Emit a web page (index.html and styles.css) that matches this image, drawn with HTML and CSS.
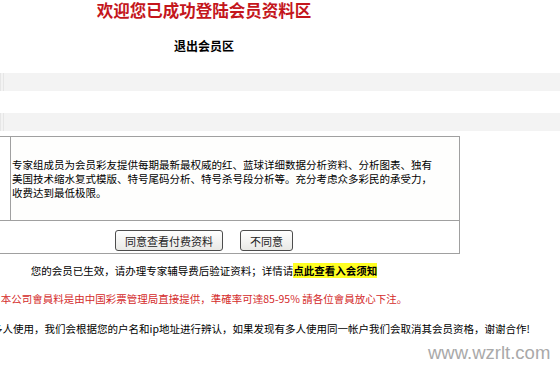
FILE: index.html
```html
<!DOCTYPE html>
<html lang="zh-CN">
<head>
  <meta charset="UTF-8">
  <meta name="viewport" content="width=device-width, initial-scale=1.0">
  <title>会员资料区</title>
  <link rel="stylesheet" href="styles.css">
</head>
<body>

<!-- HEADER -->
<div class="head">
  <h1 class="title">欢迎您已成功登陆会员资料区</h1>
  <a class="logout" href="#">退出会员区</a>
</div>

<div class="band band-first"></div>
<div class="band band-second"></div>

<!-- MEMBER AGREEMENT -->
<div class="main">
  <div class="panel">
    <div class="info">
      <div class="info-side"></div>
      <div class="info-text">
        专家组成员为会员彩友提供每期最新最权威的红、蓝球详细数据分析资料、分析图表、独有<br>
        美国技术缩水复式模版、特号尾码分析、特号杀号段分析等。充分考虑众多彩民的承受力，<br>
        收费达到最低极限。
      </div>
    </div>
    <div class="actions">
      <button class="btn">同意查看付费资料</button>
      <button class="btn">不同意</button>
    </div>
  </div>

  <p class="notice">您的会员已生效，请办理专家辅导费后验证资料；详情请<a class="mark" href="#">点此查看入会须知</a></p>
  <p class="notice notice-red">本公司會員料是由中国彩票管理局直接提供，準確率可達85-95% 請各位會員放心下注。</p>
  <p class="notice notice-wide">多人使用，我们会根据您的户名和ip地址进行辨认，如果发现有多人使用同一帐户我们会取消其会员资格，谢谢合作!</p>
</div>

<div class="watermark">www.wzrlt.com</div>

</body>
</html>
```

FILE: styles.css
```css
body {
  margin: 0;
  background: #fff;
  color: #000;
  font-family: "Noto Sans CJK SC", "Noto Sans", sans-serif;
  overflow: hidden;
}
.head { width: 408px; text-align: center; }
.title {
  margin: 0;
  font-size: 16.5px; line-height: 20px;
  font-weight: bold; color: #c4161c;
}
.logout {
  display: block; margin-top: 18px;
  font-size: 12px; line-height: 16px;
  font-weight: bold; color: #000; text-decoration: none;
}
.band { height: 18px; background: #f3f3f3; border-left: 4px double #e6e6e6; }
.band-first { margin-top: 19px; }
.band-second { margin-top: 22px; }

.main { width: 512px; margin-left: -52px; }
.panel { margin-top: 5px; border: 1px solid #a0a0a0; }
.info { display: flex; height: 83px; border-bottom: 1px solid #a0a0a0; }
.info-side { width: 61px; border-right: 1px solid #a0a0a0; }
.info-text {
  flex: 1;
  display: flex; align-items: center;
  padding-left: 1px;
  font-size: 10.5px; line-height: 14px;
  background: #fefefd;
}
.actions {
  display: flex; justify-content: center; gap: 17px;
  height: 32px; padding-top: 9px; box-sizing: border-box;
}
.btn {
  height: 21px; padding: 0 9px;
  font-family: inherit; font-size: 11px; color: #222;
  border: 1px solid #4d4d4d; border-radius: 3px;
  background: linear-gradient(#ffffff, #e9e9e6);
  cursor: pointer;
}
.notice {
  margin: 10px 0 0;
  font-size: 10.5px; line-height: 14px;
  text-align: center; white-space: nowrap;
}
.notice-red { margin-top: 14px; color: #d42b2b; }
.notice-wide { margin-top: 16px; text-align: left; padding-left: 44px; }
.mark { font-weight: bold; color: #000; background: #ffff22; text-decoration: none; }

.watermark {
  position: absolute; left: 428px; top: 343px;
  font-family: "Liberation Sans", Arial, sans-serif;
  font-size: 18.5px; line-height: 20px;
  color: #a9a9a9;
}
```
